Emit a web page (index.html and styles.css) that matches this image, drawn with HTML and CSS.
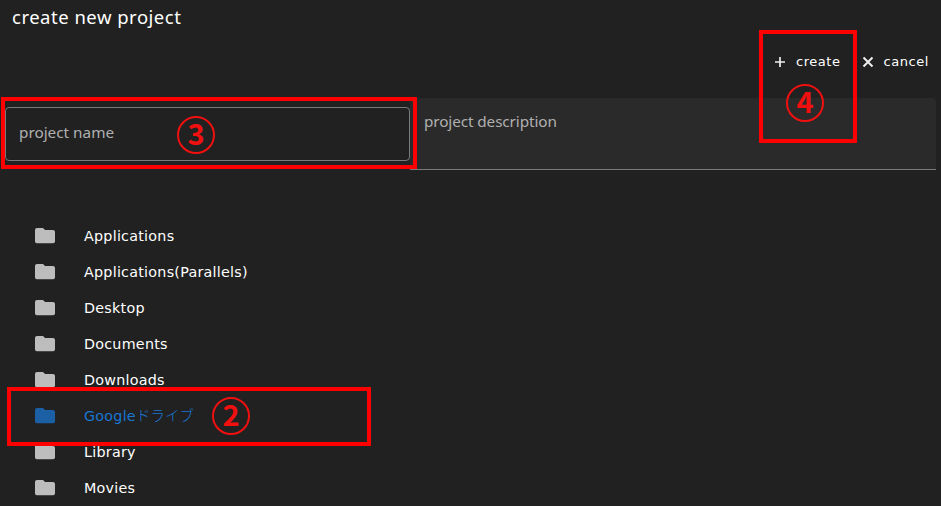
FILE: index.html
```html
<!DOCTYPE html>
<html lang="en">
<head>
<meta charset="utf-8">
<title>create new project</title>
<link rel="stylesheet" href="styles.css">
</head>
<body>
<svg class="defs" width="0" height="0"><symbol id="folder" viewBox="0 0 24 24"><path d="M10 4H4c-1.100 0-2 .9-2 2v11.500c0 1.100.9 1.700 2 1.700h16c1.100 0 2-.6 2-1.700V8c0-1.100-.9-2-2-2h-8l-2-2z"/></symbol></svg>
<h1 class="title">create new project</h1>
<div class="actions">
  <button class="action create"><svg class="glyph" viewBox="0 0 12 12"><path d="M6 1v10M1 6h10"/></svg><span>create</span></button>
  <button class="action cancel"><svg class="glyph cross" viewBox="0 0 12 12"><path d="M1.500 1.500l9 9M10.500 1.500l-9 9"/></svg><span>cancel</span></button>
</div>
<div class="fields">
  <div class="name"><span>project name</span></div>
  <div class="description"><span>project description</span></div>
</div>
<ul class="tree">
  <li><svg class="folder"><use href="#folder"/></svg><span>Applications</span></li>
  <li><svg class="folder"><use href="#folder"/></svg><span>Applications(Parallels)</span></li>
  <li><svg class="folder"><use href="#folder"/></svg><span>Desktop</span></li>
  <li><svg class="folder"><use href="#folder"/></svg><span>Documents</span></li>
  <li><svg class="folder"><use href="#folder"/></svg><span>Downloads</span></li>
  <li class="selected"><svg class="folder"><use href="#folder"/></svg><span>Google<span class="kana">ドライブ</span></span></li>
  <li><svg class="folder"><use href="#folder"/></svg><span>Library</span></li>
  <li><svg class="folder"><use href="#folder"/></svg><span>Movies</span></li>
</ul>
<div class="mark mark-folder"><span class="num">2</span></div>
<div class="mark mark-name"><span class="num">3</span></div>
<div class="mark mark-create"><span class="num">4</span></div>
</body>
</html>
```
FILE: styles.css
```css
* { box-sizing: border-box; }
body {
  margin: 0;
  height: 506px;
  overflow: hidden;
  position: relative;
  background: #212121;
  color: #fff;
  font-family: "DejaVu Sans", "Noto Sans CJK JP", sans-serif;
}
.defs { position: absolute; }
.title {
  margin: 0;
  height: 44px;
  padding: 5px 0 0 12px;
  font: 400 18.5px/24px "Noto Sans", "DejaVu Sans", sans-serif;
  letter-spacing: 0.5px;
}
.actions {
  height: 54px;
  display: flex;
  justify-content: flex-end;
  padding: 0 12px 19px 0;
  gap: 21px;
}
.action {
  display: flex;
  align-items: center;
  gap: 10px;
  padding: 0;
  border: 0;
  background: none;
  color: #fff;
  font: 13px/20px "DejaVu Sans", sans-serif;
  letter-spacing: 0.55px;
}
.glyph { width: 12px; height: 12px; fill: none; stroke: #eee; stroke-width: 1.7; }
.cross { stroke-width: 2; }
.fields {
  height: 72px;
  display: flex;
  padding: 0 5px;
  font: 15.300px/20px "Noto Sans", "DejaVu Sans", sans-serif;
  color: #b0b0b0;
}
.name {
  width: 405px;
  height: 54px;
  margin-top: 9px;
  padding: 14px 13px;
  border: 1px solid #7a7a7a;
  border-radius: 4px;
}
.description {
  flex: 1;
  padding: 13px 14px;
  background: #2a2a2a;
  border-bottom: 1px solid #7a7a7a;
  border-radius: 4px 4px 0 0;
  letter-spacing: -0.1px;
}
.tree {
  list-style: none;
  margin: 48px 0 0;
  padding: 0 0 0 33px;
  font-size: 14.3px;
  line-height: 20px;
  letter-spacing: 0.25px;
}
.tree li { display: flex; align-items: center; height: 36px; gap: 27px; }
.folder { width: 24px; height: 24px; fill: #bdbdbd; flex: none; }
.selected { color: #1976d2; }
.selected .folder { fill: #1b5fa5; }
.kana { font-family: "Noto Sans CJK JP", sans-serif; font-weight: 300; line-height: 1; }
.mark { position: absolute; border: 4px solid #f00; }
.mark-folder { left: 7px; top: 387px; width: 364px; height: 59px; }
.mark-name { left: 1px; top: 97px; width: 416px; height: 72px; }
.mark-create { left: 759px; top: 30px; width: 98px; height: 113px; }
.num {
  position: absolute;
  width: 38px;
  height: 38px;
  border: 2px solid #f01010;
  border-radius: 50%;
  color: #f01010;
  font: 700 29px/29px "Noto Sans CJK JP", sans-serif;
  text-align: center;
}
.mark-folder .num { left: 201px; top: 6px; }
.mark-name .num { left: 172px; top: 15px; }
.mark-create .num { left: 23px; top: 50px; }
```
